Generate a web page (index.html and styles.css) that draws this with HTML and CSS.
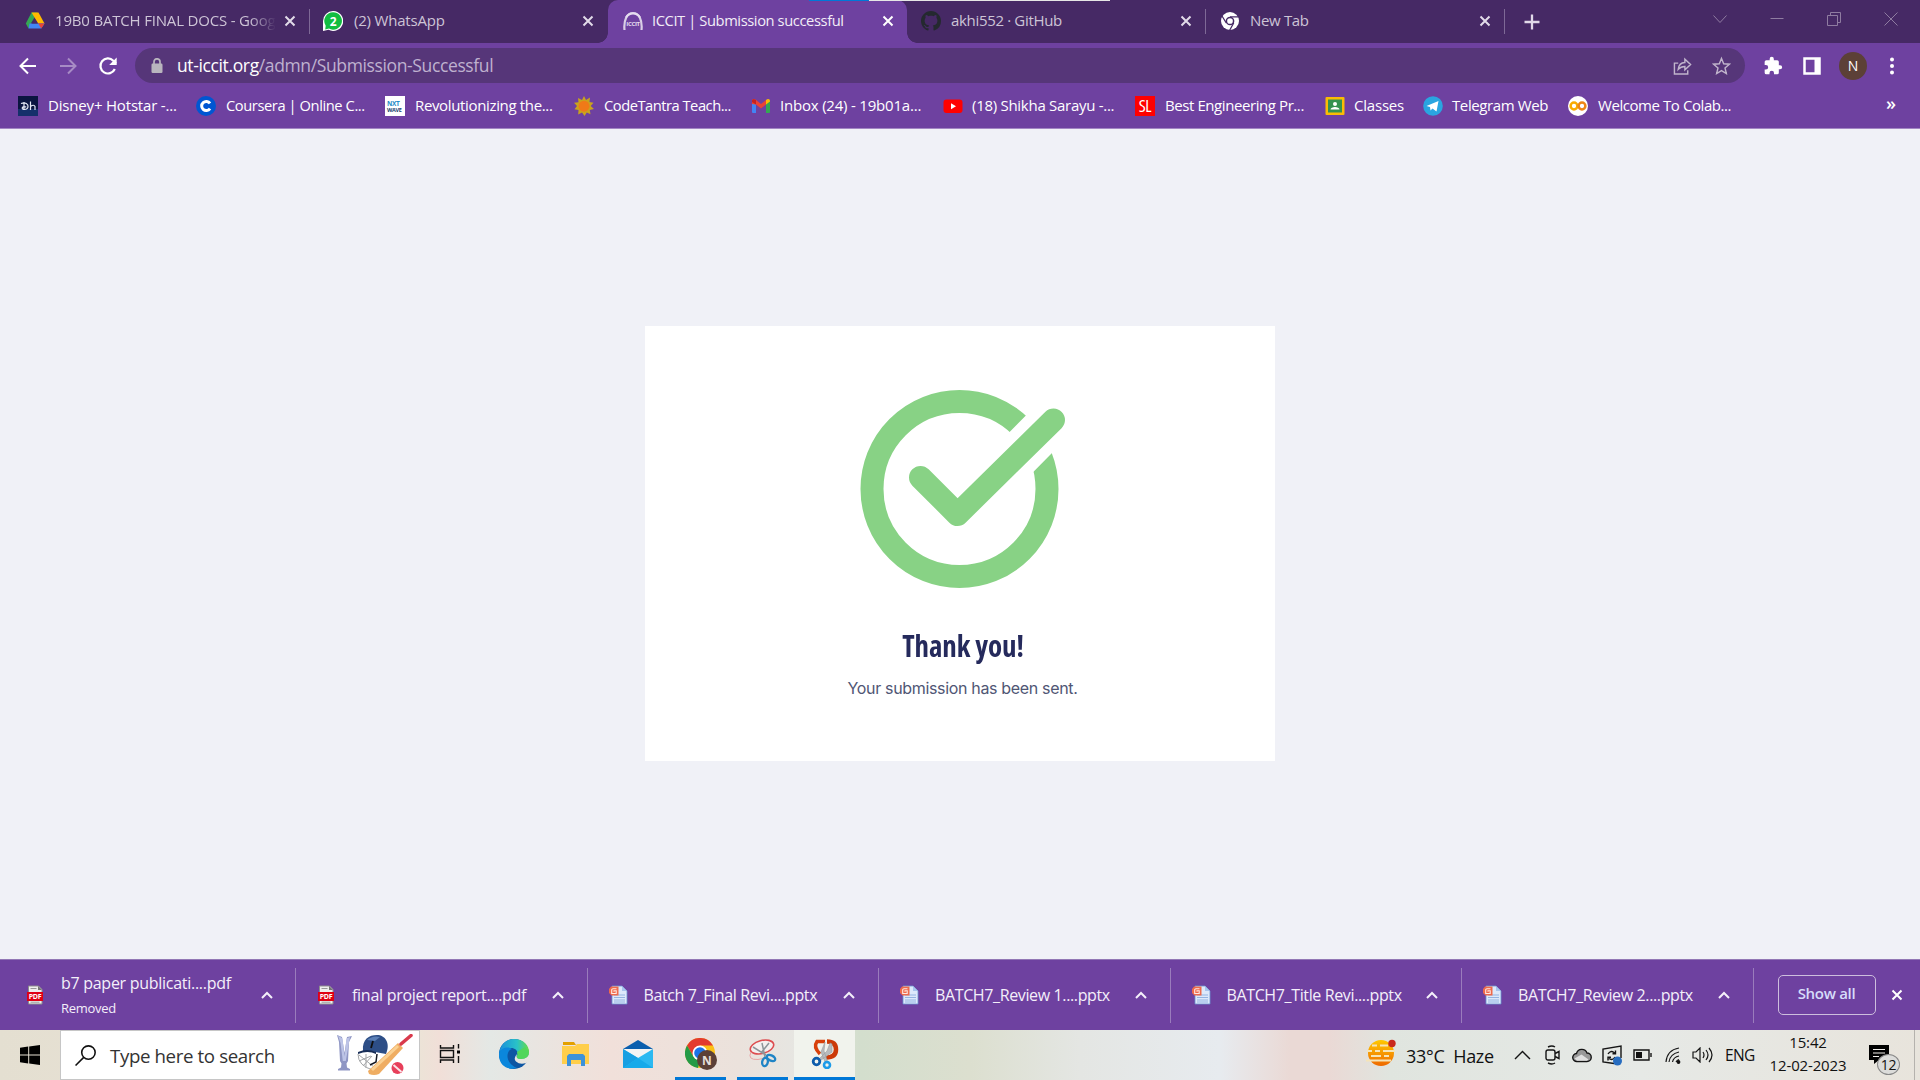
FILE: index.html
```html
<!DOCTYPE html>
<html lang="en">
<head>
<meta charset="utf-8">
<title>ICCIT | Submission successful</title>
<link rel="stylesheet" href="styles.css">
</head>
<body>
<svg width="0" height="0" class="defs" aria-hidden="true">
  <defs>
    <symbol id="x" viewBox="0 0 12 12"><path d="M1.500 1.500l9 9M10.500 1.500l-9 9" fill="none" stroke="currentColor" stroke-width="2"/></symbol>
    <symbol id="up" viewBox="0 0 12 8"><path d="M1 7l5-5 5 5" fill="none" stroke="currentColor" stroke-width="2"/></symbol>
    <symbol id="pdf" viewBox="0 0 20 20"><path d="M3.500 1h10l3.500 3.500V19H3.500z" fill="#eee" stroke="#8d8d8d"/><path d="M13 1v4h4" fill="#777"/><path d="M5.500 3.500h6M5.500 17.200h9" stroke="#999"/><path d="M2 7h16v9H2z" fill="#e00014"/><text x="10" y="14.200" text-anchor="middle" class="pdf-label">PDF</text></symbol>
    <symbol id="ppt" viewBox="0 0 20 20"><path d="M4 1h10l5 5v13H4z" fill="#dce9fb" stroke="#6b93cf" stroke-width=".8"/><path d="M14 1v5h5" fill="#a8c5ee"/><path d="M6 10h11M6 12.500h11M6 15h11M6 17h11" stroke="#94b4e2"/><path d="M3 1.500h7.500v9H3.500L1 8V4z" fill="#ee6a4c"/><path d="M8.500 3.800H5a1.300 1.300 0 0 0-1.300 1.300V8.500h4.500V5.800H6v1" fill="none" stroke="#ffe9e2" stroke-width="1.100"/></symbol>
  </defs>
</svg>

<header class="browser">
  <div class="tabstrip">
    <div class="progress"><i></i></div>
    <div class="tab t1">
      <svg class="fav" viewBox="0 0 20 20"><path d="M6.500 1.500h6L5.500 13 3.500 17.500 0.800 12.500z" fill="#34a853"/><path d="M6.500 1.500h7L19.500 12.500h-6.300z" fill="#ffba00"/><path d="M4.500 12.500h15l-3.200 5H3.500z" fill="#4285f4"/><path d="M16.300 17.500L13.200 12.500h6.300z" fill="#ea4335"/><path d="M9.700 7.500l3 5H7z" fill="#462965"/></svg>
      <span class="title fade">19B0 BATCH FINAL DOCS - Goog</span><svg class="close"><use href="#x"/></svg>
    </div>
    <div class="tab t2">
      <svg class="fav" viewBox="0 0 20 20"><path d="M10 0a10 10 0 1 1-4.500 18.800L0 20V10A10 10 0 0 1 10 0z" fill="#fff"/><path d="M10 1.300a8.700 8.700 0 1 1-4 16.300l-3.800.8.500-3.700A8.700 8.700 0 0 1 10 1.300z" fill="#12bd41"/><text x="10" y="14.500" text-anchor="middle" class="wa-count">2</text></svg>
      <span class="title">(2) WhatsApp</span><svg class="close"><use href="#x"/></svg>
    </div>
    <div class="tab t3 active">
      <svg class="fav" viewBox="0 0 20 20"><path d="M1.500 19C.5 9 4 2 10 2s9.500 7 8.500 17" fill="none" stroke="#d9cfe6" stroke-width="2.200"/><path d="M3 6.500C6 1 14 1 17 6.500" fill="none" stroke="#e5dcef" stroke-width="2"/><text x="10" y="15" text-anchor="middle" class="ic-label">ICCIT</text></svg>
      <span class="title">ICCIT | Submission successful</span><svg class="close"><use href="#x"/></svg>
    </div>
    <div class="tab t4">
      <svg class="fav" viewBox="0 0 16 16"><path fill="#24292f" d="M8 0C3.580 0 0 3.580 0 8c0 3.540 2.290 6.530 5.470 7.590.4.070.55-.17.55-.38 0-.19-.01-.82-.01-1.490-2.010.37-2.530-.49-2.690-.94-.09-.23-.48-.94-.82-1.130-.28-.15-.68-.52-.01-.53.63-.01 1.080.58 1.230.82.72 1.210 1.870.87 2.330.66.070-.52.28-.87.51-1.070-1.780-.2-3.640-.89-3.640-3.950 0-.87.31-1.590.82-2.150-.08-.2-.36-1.020.08-2.120 0 0 .67-.21 2.200.82.64-.18 1.320-.27 2-.27s1.360.09 2 .27c1.530-1.040 2.200-.82 2.200-.82.44 1.100.16 1.920.08 2.120.51.56.82 1.270.82 2.150 0 3.070-1.870 3.750-3.650 3.950.29.25.54.73.54 1.480 0 1.070-.01 1.930-.01 2.200 0 .21.15.46.55.38A8 8 0 0 0 16 8c0-4.420-3.580-8-8-8z"/></svg>
      <span class="title">akhi552 · GitHub</span><svg class="close"><use href="#x"/></svg>
    </div>
    <div class="tab t5">
      <svg class="fav" viewBox="0 0 20 20"><circle cx="10" cy="10" r="9" fill="#fff"/><circle cx="10" cy="10" r="3.600" fill="#fff" stroke="#462965" stroke-width="1.500"/><path d="M10 5.800h8.500M6.300 12L2 5M13.700 12l-4.200 7.500" stroke="#462965" stroke-width="1.300"/></svg>
      <span class="title">New Tab</span><svg class="close"><use href="#x"/></svg>
    </div>
    <svg class="plus" viewBox="0 0 16 16"><path d="M8 .5v15M.5 8h15" stroke="#e1d9e9" stroke-width="2.300"/></svg>
    <div class="window-controls">
      <svg viewBox="0 0 14 14"><path d="M.5 3.500l6.500 7 6.500-7"/></svg>
      <svg viewBox="0 0 14 14"><path d="M.5 6.500h13"/></svg>
      <svg viewBox="0 0 14 14"><path d="M.5 3.500h10v10H.5zM3.500 3.500v-3h10v10h-3"/></svg>
      <svg viewBox="0 0 14 14"><path d="M.5.5l13 13M13.500.5l-13 13"/></svg>
    </div>
  </div>

  <div class="toolbar">
    <svg class="nav" viewBox="0 0 20 20"><path d="M18 10H3M10 2.500L2.500 10l7.500 7.500" fill="none" stroke="#fff" stroke-width="2"/></svg>
    <svg class="nav" viewBox="0 0 20 20"><path d="M2 10h15M10 2.500l7.500 7.500-7.500 7.500" fill="none" stroke="#a78bc5" stroke-width="2"/></svg>
    <svg class="nav" viewBox="0 0 20 20"><path d="M16.800 13A7.500 7.500 0 1 1 15.300 4.700L18 7.500" fill="none" stroke="#fff" stroke-width="2.200"/><path d="M18.700 1.500V9h-7.500z" fill="#fff"/></svg>
    <div class="omnibox">
      <svg class="lock" viewBox="0 0 12 16"><rect x=".5" y="5.500" width="11" height="9.500" rx="1.200" fill="#b9b5be"/><path d="M3 7V3.800a3 3 0 0 1 6 0V7" fill="none" stroke="#b9b5be" stroke-width="1.700"/></svg>
      <span class="url"><b>ut-iccit.org</b>/admn/Submission-Successful</span>
      <svg class="share" viewBox="0 0 20 20"><path d="M5.500 7H1.500v11.500h14v-4M5.500 13.500c.5-5 3.500-7 7-7.200V2.800l6 5.700-6 5.500v-3.500c-3 0-5 .6-7 3z"/></svg>
      <svg class="star" viewBox="0 0 20 20"><path d="M10 2l2.300 5.600 6 .5-4.600 3.900 1.400 5.900L10 14.800l-5.100 3.100 1.400-5.900L1.700 8.100l6-.5z"/></svg>
    </div>
    <svg class="ext" viewBox="0 0 24 24"><path fill="#fff" d="M20.500 11H19V7a2 2 0 0 0-2-2h-4V3.500a2.500 2.500 0 0 0-5 0V5H4a2 2 0 0 0-2 2v3.800h1.500a2.700 2.700 0 0 1 0 5.400H2V20a2 2 0 0 0 2 2h3.800v-1.500a2.700 2.700 0 0 1 5.400 0V22H17a2 2 0 0 0 2-2v-4h1.500a2.500 2.500 0 0 0 0-5z"/></svg>
    <svg class="side" viewBox="0 0 18 18"><path d="M1.500 1.500h15v15h-15z" fill="none" stroke="#fff" stroke-width="2.500"/><path d="M11.500 1h5.500v16h-5.500z" fill="#fff"/></svg>
    <span class="avatar">N</span>
    <svg class="dots" viewBox="0 0 4 18"><circle cx="2" cy="2.500" r="2"/><circle cx="2" cy="9" r="2"/><circle cx="2" cy="15.500" r="2"/></svg>
  </div>

  <nav class="bookmarks">
    <div class="bm b1"><svg viewBox="0 0 20 20"><path d="M0 0h20v20H0z" fill="#0b1540"/><path d="M0 13h20v7H0z" fill="#16306b"/><path d="M3 7.500q5-2 6.800 1.500 1 4-3 4.500-3 0-2.500-1.800 1-1.500 4-.7M6 6v8M12.500 5.500v8.500M12.500 10.500q3.500-2.500 4.500 0v3.500" fill="none" stroke="#e4e8f4" stroke-width="1.200"/></svg><span>Disney+ Hotstar -...</span></div>
    <div class="bm b2"><svg viewBox="0 0 20 20"><circle cx="10" cy="10" r="10" fill="#0056d2"/><path d="M14 7.300a4.600 4.600 0 1 0 0 5.400" fill="none" stroke="#fff" stroke-width="3"/></svg><span>Coursera | Online C...</span></div>
    <div class="bm b3"><svg viewBox="0 0 20 20"><path d="M0 0h20v20H0z" fill="#fff"/><text x="2" y="9.500" class="nxt">NXT</text><text x="2" y="15.500" class="nxt dark">WAVE</text></svg><span>Revolutionizing the...</span></div>
    <div class="bm b4"><svg viewBox="0 0 20 20"><path d="M10 0l2 4 4-2.500-.5 4.500 4 .8-2.800 3.200L20 13l-4.200 1 .7 4.200-3.700-1.800L10.500 20 8 16.500 4.200 18.500 4.500 14 .5 13.200 3 10 0 6.800l4.500-.6L4 2l4 2z" fill="#c9a31d"/><circle cx="10" cy="10.200" r="5.500" fill="#f07a18"/></svg><span>CodeTantra Teach...</span></div>
    <div class="bm b5"><svg viewBox="0 0 20 20"><path d="M1 5l4 3v9H2a1 1 0 0 1-1-1z" fill="#4285f4"/><path d="M19 5l-4 3v9h3a1 1 0 0 0 1-1z" fill="#34a853"/><path d="M1 8V5c0-2 2-2.500 3.500-1.400L10 8l5-4v4.500l-5 4-5-4z" fill="#ea4335"/><path d="M15 8.500V4c2-2 4-1 4 1v.5z" fill="#fbbc04"/><path d="M1 5c0-2 2-2.500 4-1v4.500L1 6z" fill="#c5221f"/></svg><span>Inbox (24) - 19b01a...</span></div>
    <div class="bm b6"><svg viewBox="0 0 20 20"><rect x=".5" y="3.500" width="19" height="13.500" rx="3" fill="#f00"/><path d="M8 7.200v6l5-3z" fill="#fff"/></svg><span>(18) Shikha Sarayu -...</span></div>
    <div class="bm b7"><i class="sl">SL</i><span>Best Engineering Pr...</span></div>
    <div class="bm b8"><svg viewBox="0 0 20 20"><rect x=".5" y="1" width="19" height="18" rx="1" fill="#fbbc04"/><path d="M3 3.500h14v13H3z" fill="#34924f"/><circle cx="10" cy="8" r="2" fill="#fff"/><path d="M5.500 13.500c0-3.500 9-3.500 9 0z" fill="#fff"/></svg><span>Classes</span></div>
    <div class="bm b9"><svg viewBox="0 0 20 20"><circle cx="10" cy="10" r="9.800" fill="#2aa5e0"/><path d="M3.500 10L15.500 5l-2 10.500-4-3-2 2-.5-3.500z" fill="#fff"/></svg><span>Telegram Web</span></div>
    <div class="bm b10"><svg viewBox="0 0 20 20"><circle cx="10" cy="10" r="10" fill="#fff"/><g fill="none" stroke="#f9ab00" stroke-width="2.500"><circle cx="6" cy="10" r="3.400"/><circle cx="14" cy="10" r="3.400" stroke="#ee8515"/></g></svg><span>Welcome To Colab...</span></div>
    <span class="more">»</span>
  </nav>
</header>

<main class="page">
  <section class="card">
    <svg class="check" viewBox="0 0 206 198"><circle cx="99.500" cy="99" r="87.500" fill="none" stroke="#88d285" stroke-width="23"/><path d="M60 88l38 38L194 29" fill="none" stroke="#fff" stroke-width="45"/><path d="M60.500 87.500L97.500 124.500L193.500 30" fill="none" stroke="#88d285" stroke-width="23" stroke-linecap="round" stroke-linejoin="round"/></svg>
    <h1>Thank you!</h1>
    <p>Your submission has been sent.</p>
  </section>
</main>

<section class="downloads">
  <div class="dl d1"><svg class="file"><use href="#pdf"/></svg><div class="name"><span>b7 paper publicati....pdf</span><small>Removed</small></div><svg class="up"><use href="#up"/></svg></div>
  <div class="dl d2"><svg class="file"><use href="#pdf"/></svg><div class="name"><span>final project report....pdf</span></div><svg class="up"><use href="#up"/></svg></div>
  <div class="dl d3"><svg class="file"><use href="#ppt"/></svg><div class="name"><span>Batch 7_Final Revi....pptx</span></div><svg class="up"><use href="#up"/></svg></div>
  <div class="dl d4"><svg class="file"><use href="#ppt"/></svg><div class="name"><span>BATCH7_Review 1....pptx</span></div><svg class="up"><use href="#up"/></svg></div>
  <div class="dl d5"><svg class="file"><use href="#ppt"/></svg><div class="name"><span>BATCH7_Title Revi....pptx</span></div><svg class="up"><use href="#up"/></svg></div>
  <div class="dl d6"><svg class="file"><use href="#ppt"/></svg><div class="name"><span>BATCH7_Review 2....pptx</span></div><svg class="up"><use href="#up"/></svg></div>
  <button class="show-all">Show all</button>
  <svg class="close"><use href="#x"/></svg>
</section>

<footer class="taskbar">
  <div class="start"><svg viewBox="0 0 20 20"><path d="M0 2.800l8.200-1.200v8H0zM9.200 1.400L20 0v9.600H9.200zM0 10.500h8.200v8L0 17.300zM9.200 10.500H20V20L9.200 18.600z"/></svg></div>
  <div class="search">
    <svg class="glass" viewBox="0 0 20 20"><circle cx="12.800" cy="7.200" r="6.400" fill="none" stroke="#111" stroke-width="1.500"/><path d="M8.300 11.800L.5 19.500" stroke="#111" stroke-width="1.500"/></svg>
    <span>Type here to search</span>
    <svg class="cricket" viewBox="0 0 78 42">
      <path d="M1 1l5 2 2.500 16L11 3l5-1-3 6-1 19-1.500 2.500.5 4 3 1.500v1.500H2V35l3-1.500.5-4L4 27 3 8z" fill="#8f96c4"/><path d="M2 1.500l4.500 3 2 18 2-18L14 3 9.800 27h-3L4.500 9z" fill="#bcc3e6"/>
      <path d="M22 20q0 12 15 16M23 21l15 12M23 27l12-5M27 32l9-10M30 20v14" stroke="#a3a5a7" fill="none"/>
      <path d="M27 17C26 5 33 1 41 1s14 8 9 19l-11-2z" fill="#2d4e86"/><path d="M31 6q6-5 13-3l-5 4z" fill="#5a7fb6"/><path d="M22 18q9-4 18 0v2q-8-4-18 0z" fill="#182e57"/><path d="M37 7l-2 7" stroke="#111" stroke-width="1.800"/><path d="M41 20l-1 8-6 3" stroke="#161a24" stroke-width="1.500" fill="none"/>
      <path d="M32 37L62 9l5 5-24 26q-5 2-10 0z" fill="#efad62"/><path d="M36 36L62 12" stroke="#fbd193" stroke-width="3"/><path d="M65 10L75 1.500" stroke="#d93a4c" stroke-width="3.500" stroke-linecap="round"/>
      <circle cx="61.500" cy="34" r="6" fill="#e73f5a"/><path d="M57.500 31l8 7" stroke="#fbe4e8" stroke-width="2"/></svg>
  </div>
  <div class="task view"><svg viewBox="0 0 22 20"><path d="M1.500 1v3h13V1M1.500 19v-3h13v3M1.500 6.500h13v7h-13zM19.500 0v4.500M19.500 12v7" fill="none" stroke="#111" stroke-width="1.400"/><path d="M18 6.500h3v3h-3z"/></svg></div>
  <div class="task edge"><svg viewBox="0 0 30 30"><defs><linearGradient id="eg" x1="0" x2="1"><stop stop-color="#198edb"/><stop offset=".6" stop-color="#29c2c8"/><stop offset="1" stop-color="#67dc43"/></linearGradient></defs><circle cx="15" cy="15" r="15" fill="#0d56a3"/><path d="M0 14C2 3 10 0 15 0c10 0 15 7 15 13 0 5-4 7-8 7-4 0-5-1-4-3 2-4-1-8-6-8-5 0-11 2-12 5z" fill="url(#eg)"/><path d="M0 14c2-5 9-7 13-4-5 1-7 10 0 16q2 2 5 3C7 32-1 25 0 14z" fill="#0b87dc"/><path d="M30 12.500V22q-1.500 1.500-3 2-6 2-10-1.500-3-3 1-7.500-2 5 4 5 8-.5 8-7.500z" fill="#e7e5df"/><path d="M30 13q0 7-8 7-5 0-4-3 1-1 0-4l8-5z" fill="#51d65b"/></svg></div>
  <div class="task folder"><svg viewBox="0 0 28 24"><path d="M1 0h11l2 3H1z" fill="#e3a000"/><path d="M0 4h13l2-2h12v20H0z" fill="#ffce4b"/><path d="M5 24V14l2-2h14l2 2v10h-4v-6H9v6z" fill="#3d92d9"/></svg></div>
  <div class="task mail"><svg viewBox="0 0 30 28"><path d="M0 9L15 0l15 9z" fill="#0b5fae"/><path d="M2 9h26v9H2z" fill="#f4f4f4"/><path d="M0 9l15 9 15-9v19H0z" fill="#2cb9f1"/><path d="M0 9l15 9L0 28z" fill="#179fe2"/><path d="M0 28l15-10 15 10z" fill="#16aaea"/></svg></div>
  <div class="task chrome open"><svg viewBox="0 0 32 32"><circle cx="15" cy="15" r="15" fill="#fbc116"/><path d="M2 7.500A15 15 0 0 1 28 7.500H15L8.500 18.800z" fill="#e33b2e"/><path d="M2 7.500L8.500 18.800 15 22.500 13 30A15 15 0 0 1 2 7.500z" fill="#249a47"/><circle cx="15" cy="15" r="7.500" fill="#fff"/><circle cx="15" cy="15" r="5.800" fill="#1a73e8"/><circle cx="22" cy="22" r="10" fill="#5c4037"/><text x="22" y="26.500" text-anchor="middle" class="profile">N</text></svg></div>
  <div class="task snip open"><svg viewBox="0 0 30 30"><ellipse cx="14" cy="8" rx="12" ry="6.500" transform="rotate(-15 14 8)" fill="#f4efef" stroke="#dd4d50" stroke-width="1.600"/><path d="M3 13q-4 8 7 7.500 5-.5 9-3" fill="none" stroke="#e9a5a5"/><path d="M5 8l13 8M14 4l3 14M13 14l8-10" stroke="#8d9499" stroke-width="1.500"/><g fill="none" stroke="#1f84c6" stroke-width="2.300"><ellipse cx="17" cy="23" rx="2.800" ry="4.200" transform="rotate(10 17 23)"/><ellipse cx="23" cy="19" rx="4.500" ry="2.600" transform="rotate(25 23 19)"/></g></svg></div>
  <div class="task sketch open current"><svg viewBox="0 0 28 30"><path d="M9 15Q2 8 6 2.500h8" fill="none" stroke="#d8400a" stroke-width="3.500"/><path d="M16 2.500q9 0 9 8t-10 8" fill="none" stroke="#cc3a08" stroke-width="4.500"/><path d="M14 3l-1 9 4 12-3-1-4-10zM19 4l2 1v8L9 22l-2-1 9-9z" fill="#b8bbbd" stroke="#9b9ea0" stroke-width=".6"/><circle cx="5.500" cy="22.500" r="3.300" fill="none" stroke="#0d5cab" stroke-width="2.800"/><circle cx="16" cy="26" r="3" fill="none" stroke="#1c9be9" stroke-width="2.600"/></svg></div>

  <div class="weather"><svg viewBox="0 0 30 30"><defs><linearGradient id="sun" x2="0" y2="1"><stop stop-color="#ffc800"/><stop offset="1" stop-color="#ee6900"/></linearGradient></defs><circle cx="15" cy="15" r="13" fill="url(#sun)"/><path d="M6 7.500h5M14 7.500h8M1 13h5M9 13h5M17 13h12M5 18h10M18 18h5M0 22.500h25" stroke="#f5e4b8" stroke-width="2"/><circle cx="26" cy="5.500" r="3.700" fill="#c9281c"/></svg><span>33°C&nbsp; Haze</span></div>
  <div class="tray">
    <svg class="i1" viewBox="0 0 17 10"><path d="M1 9l7.500-7.500L16 9"/></svg>
    <svg class="i2" viewBox="0 0 16 20"><rect x="1" y="5" width="9" height="10" rx="2"/><path d="M10 8.500l4-2v7l-4-2M3 2q4-2 7 0M3 18q4 2 7 0"/></svg>
    <svg class="i3" viewBox="0 0 20 16"><path d="M5 14.500a4 4 0 0 1-.5-8A5.500 5.500 0 0 1 15 6a4.200 4.200 0 0 1 0 8.500z" fill="#999"/><path d="M2.500 11.500L9.500 7.500l7 5-1.500 1.300H5z" fill="#e0e0e0" stroke="none"/></svg>
    <svg class="i4" viewBox="0 0 20 21"><path d="M12 18.500L1 17V4l18-3v12M6 9q2.500-4 6-1.500l1 1M13.500 5.500v3.300h-3M13 12q-2.500 4-6 1.500M6 15.500v-3.300h3"/><circle cx="15.500" cy="16" r="4.500" fill="#276dc0" stroke="none"/></svg>
    <svg class="i5" viewBox="0 0 19 12"><path d="M1 1h15v10H1zM18 4v4"/><path d="M3 3h6v6H3z" fill="#111" stroke="none"/></svg>
    <svg class="i6" viewBox="0 0 16 17"><path d="M1 15Q2 3 14 1M4 15q1-8 10-10M7.500 15q1-5 6.500-6M11 15q1-2 3-2.500" stroke-width="1.200"/><circle cx="13.500" cy="15" r="1.200" fill="#111"/></svg>
    <svg class="i7" viewBox="0 0 21 16"><path d="M1 5h3l4-4v14l-4-4H1zM11 5q2 3 0 6M14 3q4 5 0 10M17 1q6 7 0 14" stroke-width="1.200"/></svg>
    <span class="lang">ENG</span>
  </div>
  <div class="clock"><span>15:42</span><span>12-02-2023</span></div>
  <div class="notice"><svg viewBox="0 0 20 20"><path d="M0 0h20v15H10l-5 4v-4H0z"/><path d="M4 4.500h12M4 8h12M4 11.500h6" stroke="#f0eeea" stroke-width="1.200"/></svg><span class="count">12</span></div>
  <i class="desktop-edge"></i>
</footer>
</body>
</html>
```
FILE: styles.css
```css
* { box-sizing: border-box; }
body { margin: 0; width: 1920px; height: 1080px; overflow: hidden; display: flex; flex-direction: column; font-family: "Open Sans", "Noto Sans", sans-serif; background: #f0f1f7; }
svg { flex: none; display: block; }
span { white-space: nowrap; }
.defs { position: absolute; }
svg text { font-family: "Open Sans", sans-serif; font-weight: 700; }
.pdf-label { font-size: 7px; fill: #fff; }
.wa-count { font-size: 12px; fill: #fff; }
.ic-label { font-size: 6px; fill: #e5dcef; }
.nxt { font-size: 6.5px; fill: #258bc6; }
.nxt.dark { font-size: 5.5px; fill: #18436f; }
.sl { width: 20px; height: 20px; margin-right: 10px; background: #f00; color: #fff; font: 400 17px/20px "Open Sans", sans-serif; font-stretch: 75%; text-align: center; }
.profile { font-size: 12px; fill: #e5deda; }

.browser { flex: none; height: 129px; background: #6e41a0; border-bottom: 1px solid #a286c3; }
.tabstrip { height: 43px; background: #462965; display: flex; align-items: center; position: relative; color: #cdc4d6; }
.progress { position: absolute; left: 809px; top: 0; width: 301px; height: 1px; background: #e6e6e6; z-index: 2; }
.progress i { display: block; width: 60px; height: 1px; background: #0078d7; }
.tab { height: 43px; display: flex; align-items: center; flex: none; position: relative; font-size: 15px; letter-spacing: -.33px; padding-bottom: 1px; }
.tab .fav { width: 20px; height: 20px; margin-right: 10px; }
.tab .title { flex: 1; overflow: hidden; padding-bottom: 2px; }
.fade { mask-image: linear-gradient(90deg, #000 88%, transparent); }
.close { width: 12px; height: 12px; color: #e2dbe9; }
.t1 { width: 309px; padding-left: 25px; padding-right: 13px; }
.t1 .title { margin-right: 8px; letter-spacing: -.18px; }
.t2 { width: 299px; padding-left: 14px; padding-right: 14px; }
.t2 .fav { margin-right: 11px; }
.t2 .title { letter-spacing: -.2px; }
.t3 { width: 299px; padding-left: 15px; padding-right: 13px; color: #f2edf7; background: #6e41a0; border-radius: 10px 10px 0 0; }
.t3 .fav { margin-right: 9px; }
.t3 .title { font-size: 14.7px; letter-spacing: -.4px; }
.t3 .close { color: #fff; }
.t3::before, .t3::after { content: ""; position: absolute; bottom: 0; width: 10px; height: 10px; }
.t3::before { left: -10px; background: radial-gradient(circle at 0 0, #462965 9.5px, #6e41a0 10px); }
.t3::after { right: -10px; background: radial-gradient(circle at 100% 0, #462965 9.5px, #6e41a0 10px); }
.t4 { width: 298px; padding-left: 14px; padding-right: 13px; }
.t5 { width: 300px; padding-left: 15px; padding-right: 14px; }
.t2 { background: linear-gradient(#7e6996, #7e6996) 0 50% / 1px 25px no-repeat; }
.t5 { background: linear-gradient(#7e6996, #7e6996) 0 50% / 1px 25px no-repeat, linear-gradient(#7e6996, #7e6996) 100% 50% / 1px 25px no-repeat; }
.plus { width: 16px; height: 16px; margin-left: 19px; }
.window-controls { display: flex; gap: 43px; margin-left: auto; margin-right: 22px; padding-bottom: 6px; }
.window-controls svg { width: 14px; height: 14px; fill: none; stroke: #8f7ca1; stroke-width: 1; }

.toolbar { height: 40px; display: flex; align-items: center; padding: 5px 24px 0 18px; }
.nav { width: 20px; height: 20px; margin-right: 20px; }
.omnibox { width: 1610px; height: 35px; border-radius: 18px; background: #563679; display: flex; align-items: center; padding: 0 14px 0 16px; margin-left: -3px; }
.lock { width: 12px; height: 16px; margin-right: 14px; }
.url { flex: 1; font-size: 17.5px; letter-spacing: -.37px; color: #bfb1cf; line-height: 35px; }
.url b { color: #fff; font-weight: 400; }
.share, .star { width: 19px; height: 20px; fill: none; stroke: #c1b5cc; stroke-width: 1.5; }
.star { margin-left: 20px; }
.ext { width: 20px; height: 20px; margin-left: 18px; }
.side { width: 18px; height: 18px; margin-left: 20px; }
.avatar { width: 28px; height: 28px; border-radius: 50%; background: #5c4037; color: #fff; font-size: 14px; line-height: 27px; text-align: center; margin-left: 18px; }
.dots { width: 4px; height: 18px; fill: #fff; margin-left: 23px; }

.bookmarks { height: 45px; display: flex; align-items: center; padding-left: 18px; padding-right: 24px; color: #fff; font-size: 15px; }
.bm { display: flex; align-items: center; flex: none; letter-spacing: -.35px; }
.bm svg { width: 20px; height: 20px; margin-right: 10px; }
.bm span { padding-bottom: 2px; }
.b1 { width: 178px; letter-spacing: -.18px; }
.b2 { width: 189px; font-size: 14.7px; letter-spacing: -.42px; }
.b3 { width: 189px; }
.b4 { width: 177px; font-size: 14.7px; letter-spacing: -.48px; }
.b5 { width: 192px; letter-spacing: -.2px; }
.b6 { width: 192px; letter-spacing: -.28px; }
.b7 { width: 190px; letter-spacing: -.42px; }
.b8 { width: 98px; letter-spacing: -.2px; }
.b9 { width: 145px; letter-spacing: -.4px; }
.b10 { width: 170px; letter-spacing: -.43px; }
.b5 svg, .b6 svg, .b8 svg, .b9 svg { margin-right: 9px; }
.more { margin-left: auto; font-size: 18px; font-weight: 600; line-height: 20px; padding-bottom: 5px; }

.page { flex: 1; display: flex; justify-content: center; padding-top: 197px; }
.card { width: 630px; height: 435px; background: #fff; display: flex; flex-direction: column; align-items: center; padding-top: 64px; }
.check { width: 206px; height: 198px; margin-left: 5px; overflow: visible; }
.card h1 { margin: 36px 0 0 5px; font: 700 29.5px/44px "Open Sans", sans-serif; font-stretch: 75%; color: #252a5c; letter-spacing: -.1px; height: 44px; transform: scaleX(.98); }
.card p { margin: 8px 0 0 5px; font: 400 16px/24px Inter, "Liberation Sans", sans-serif; color: #505674; letter-spacing: -.33px; }

.downloads { flex: none; height: 71px; background: #6e41a0; border-top: 1px solid #9277b5; display: flex; align-items: center; color: #f4effa; }
.dl { height: 55px; display: flex; align-items: center; flex: none; border-right: 1px solid #9a7cbc; padding-right: 23px; font-size: 16px; letter-spacing: -.28px; }
.file { width: 20px; height: 20px; margin-left: 20px; margin-right: 16px; }
.name { flex: 1; display: flex; flex-direction: column; line-height: 22px; }
.name small { font-size: 13px; line-height: 18px; margin-top: 5px; letter-spacing: -.3px; }
.up { width: 12px; height: 8px; }
.d1 { width: 296px; }
.d1 .name { padding-bottom: 1px; }
.d2, .d3, .d4, .d5, .d6 { width: 291.5px; }
.d3, .d4, .d5, .d6 { letter-spacing: -.37px; }
.d1 .file { margin-left: 25px; }
.d1 .up { margin-right: -1px; }
.show-all { width: 98px; height: 40px; margin-left: 24px; border: 1px solid #cdbedd; border-radius: 5px; background: none; color: #d6dcfa; font: 600 15px "Open Sans", sans-serif; letter-spacing: -.3px; padding: 0 0 4px; }
.downloads > .close { color: #fff; margin-left: 15px; }

.taskbar { flex: none; height: 50px; display: flex; background: linear-gradient(90deg, #e4dfd1 0, #ece3d7 420px, #f1dfd8 440px, #e4e8e5 490px, #f1e0da 610px, #ebe2dc 740px, #e6e6e2 800px, #d3decd 860px, #dcdfcf 970px, #e4e6e3 1080px, #e7ebef 1220px, #ead9d5 1290px, #ead9d5 1330px, #e0e5df 1390px, #e6e9e6 1640px, #e8e4dc 1920px); color: #111; }
.start { width: 60px; display: grid; place-items: center; }
.start svg { width: 20px; height: 20px; }
.search { width: 360px; background: #fff; border: 1px solid #c6c6c6; display: flex; align-items: center; padding-left: 14px; font-size: 18.7px; color: #333; }
.search > span { flex: 1; letter-spacing: -.38px; }
.glass { width: 21px; height: 21px; margin-right: 14px; }
.cricket { width: 78px; height: 42px; margin-right: 5px; }
.task { display: grid; place-items: center; flex: none; width: 62px; border-bottom: 3px solid transparent; }
.task svg { width: 30px; height: 30px; }
.view { width: 60px; } .view svg { width: 22px; height: 20px; }
.edge { width: 68px; }
.folder { width: 56px; } .folder svg { width: 28px; height: 24px; }
.mail { width: 68px; } .mail svg { height: 28px; }
.chrome { width: 51px; margin: 0 11px 0 3px; } .chrome svg { width: 32px; height: 32px; }
.snip { width: 51px; margin-right: 6px; }
.open { border-bottom-color: #0078d7; }
.current { width: 61px; background: #f1f3ed; }
.weather { margin-left: 511px; display: flex; align-items: center; font-size: 18px; letter-spacing: -.3px; flex: none; width: 128px; }
.weather svg { width: 30px; height: 30px; margin: -4px 10px 0 0; }
.weather span { padding-top: 1px; }
.tray { display: flex; align-items: center; flex: none; margin-left: 20px; width: 241px; }
.tray svg { fill: none; stroke: #151515; stroke-width: 1.4; }
.i1 { width: 17px; height: 10px; } .i2 { width: 16px; height: 20px; margin-left: 14px; }
.i3 { width: 20px; height: 16px; margin-left: 11px; } .i4 { width: 20px; height: 21px; margin-left: 10px; }
.i5 { width: 19px; height: 12px; margin-left: 11px; } .i6 { width: 16px; height: 17px; margin-left: 13px; }
.i7 { width: 21px; height: 16px; margin-left: 11px; }
.lang { margin-left: 12px; font-size: 15.5px; letter-spacing: -.6px; }
.clock { display: flex; flex-direction: column; align-items: center; width: 76px; margin-left: 15px; flex: none; font-size: 15px; line-height: 23px; letter-spacing: -.15px; padding-top: 1px; }
.notice { position: relative; margin-left: 23px; padding-top: 15px; }
.notice svg { width: 20px; height: 20px; }
.count { position: absolute; left: 8px; top: 24px; width: 23px; height: 21px; border: 1px solid #888; border-radius: 50%; background: #dcdcda; font-size: 14px; line-height: 19px; text-align: center; letter-spacing: -.2px; }
.desktop-edge { width: 1px; margin-left: auto; margin-right: 5px; background: #b5b2ad; }
```
